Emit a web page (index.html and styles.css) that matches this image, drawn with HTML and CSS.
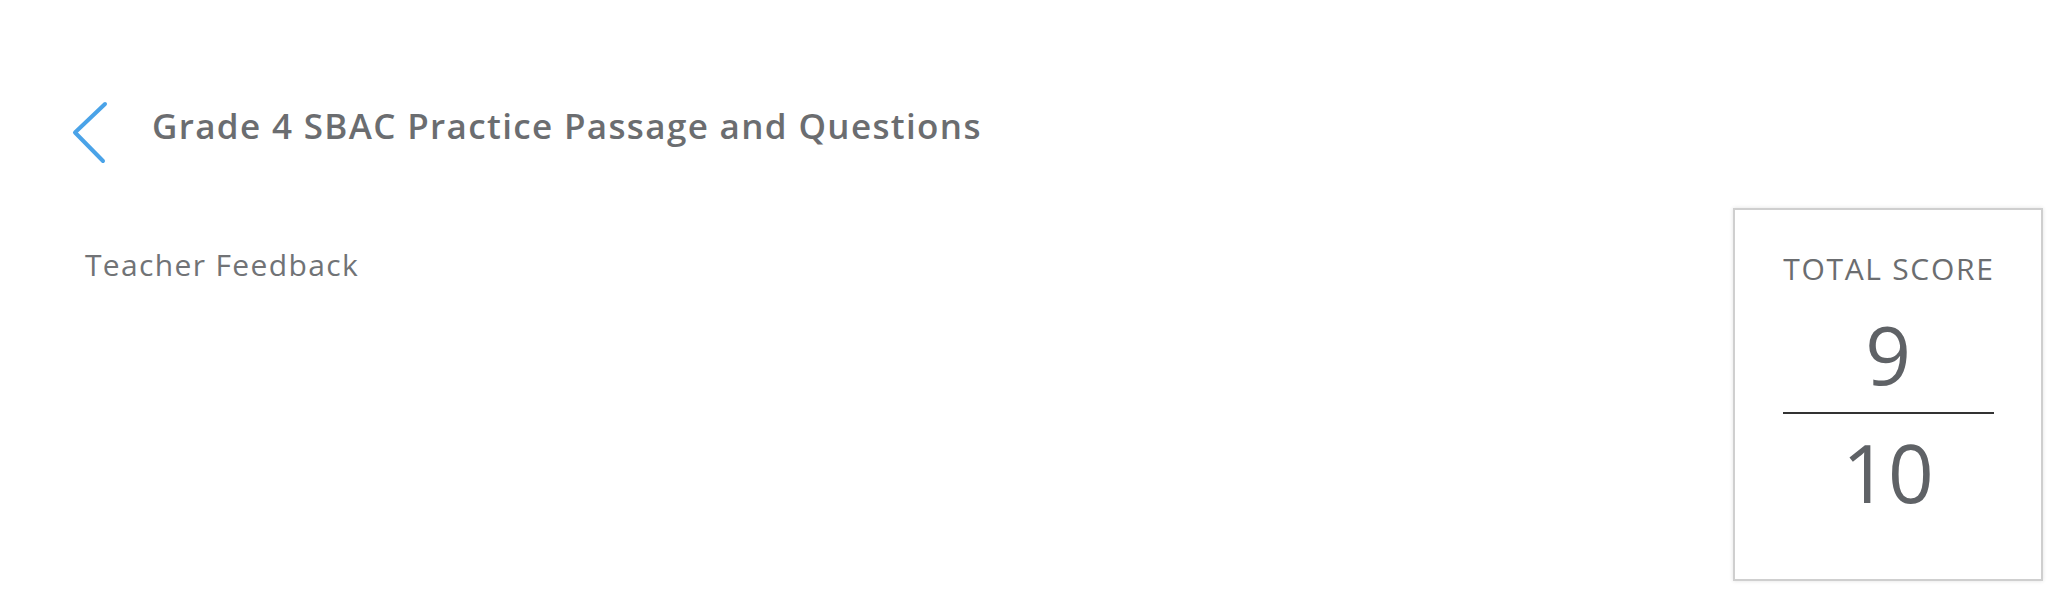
FILE: index.html
```html
<!DOCTYPE html>
<html lang="en">
<head>
<meta charset="utf-8">
<title>Grade 4 SBAC Practice Passage and Questions</title>
<link rel="stylesheet" href="styles.css">
</head>
<body>
<header class="header">
  <a class="back" href="#" aria-label="Back">
    <svg width="40" height="66" viewBox="0 0 40 66" fill="none" stroke="#4aa3e8" stroke-width="4" stroke-linecap="round" stroke-linejoin="round"><path d="M35 4 L5 32.5 L33 61"/></svg>
  </a>
  <h1 class="title">Grade 4 SBAC Practice Passage and Questions</h1>
</header>
<main class="content">
  <div class="feedback">Teacher Feedback</div>
  <aside class="score">
    <div class="score-label">TOTAL SCORE</div>
    <div class="score-num">9</div>
    <div class="score-line"></div>
    <div class="score-den">10</div>
  </aside>
</main>
</body>
</html>
```
FILE: styles.css
```css
html, body {
  margin: 0;
  padding: 0;
  background: #fff;
}
body {
  font-family: "Open Sans", "Noto Sans", sans-serif;
  color: #6b6d70;
  width: 2048px;
  height: 589px;
  overflow: hidden;
}
.header {
  display: flex;
  align-items: flex-start;
  padding: 100px 0 0 70px;
  height: 66px;
}
.back {
  display: block;
  width: 40px;
  height: 66px;
}
.back svg { display: block; }
.title {
  margin: 8px 0 0 42px;
  font-size: 35px;
  line-height: 35px;
  font-weight: 600;
  letter-spacing: 1.35px;
  color: #6b6d70;
}
.content {
  display: flex;
  justify-content: space-between;
  align-items: flex-start;
  margin-top: 42px;
  padding: 0 5px 0 85px;
}
.feedback {
  margin-top: 42px;
  font-size: 30px;
  line-height: 30px;
  letter-spacing: 1.35px;
  color: #717376;
}
.score {
  box-sizing: border-box;
  width: 310px;
  height: 373px;
  border: 2px solid #cfcfcf;
  box-shadow: 0 0 4px rgba(0,0,0,0.12);
  display: flex;
  flex-direction: column;
  align-items: center;
  padding-top: 44px;
}
.score-label {
  font-size: 30px;
  line-height: 30px;
  letter-spacing: 1.7px;
  margin-left: 1.7px;
  color: #6b6d70;
}
.score-num, .score-den {
  font-size: 80px;
  line-height: 80px;
  font-weight: 400;
  color: #5f6266;
}
.score-num { margin-top: 30px; }
.score-line {
  width: 211px;
  height: 2px;
  background: #333;
  margin-top: 18px;
}
.score-den { margin-top: 18px; }
```
